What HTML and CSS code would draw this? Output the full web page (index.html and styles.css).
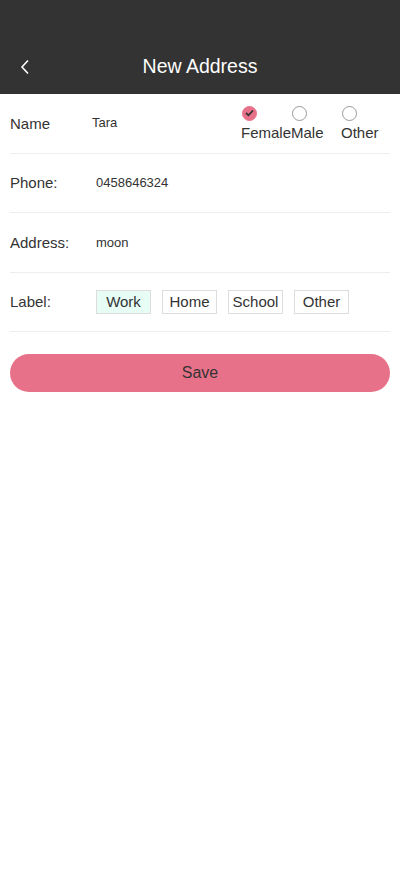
FILE: index.html
```html
<!DOCTYPE html>
<html>
<head>
<meta charset="utf-8">
<link rel="stylesheet" href="styles.css">
</head>
<body>
<div class="header">
  <div class="nav">
    <span class="back"><svg width="12" height="16" viewBox="0 0 12 16"><path d="M9 1.5 L3 8 L9 14.5" fill="none" stroke="#fff" stroke-width="1.6"/></svg></span>
    <span class="title">New Address</span>
  </div>
</div>
<div class="form">
  <div class="row">
    <span class="label name-label">Name</span>
    <span class="value name-value">Tara</span>
    <div class="radios">
      <div class="radio"><span class="circle checked"><svg width="9" height="8" viewBox="0 0 9 8"><path d="M1 4 L3.5 6.3 L8 1.5" fill="none" stroke="#333" stroke-width="1.8"/></svg></span><span class="rlabel">Female</span></div>
      <div class="radio"><span class="circle"></span><span class="rlabel">Male</span></div>
      <div class="radio"><span class="circle"></span><span class="rlabel">Other</span></div>
    </div>
  </div>
  <div class="row">
    <span class="label">Phone:</span>
    <span class="value">0458646324</span>
  </div>
  <div class="row">
    <span class="label">Address:</span>
    <span class="value">moon</span>
  </div>
  <div class="row">
    <span class="label">Label:</span>
    <div class="chips">
      <span class="chip active">Work</span>
      <span class="chip">Home</span>
      <span class="chip">School</span>
      <span class="chip">Other</span>
    </div>
  </div>
  <div class="save">Save</div>
</div>
</body>
</html>
```
FILE: styles.css
```css
* { box-sizing: border-box; }
body {
  margin: 0;
  font-family: "Liberation Sans", Arial, sans-serif;
  color: #333;
  background: #fff;
}
.header {
  background: #333333;
  height: 94px;
  padding-top: 44px;
}
.nav {
  height: 44px;
  display: flex;
  align-items: center;
  justify-content: center;
  position: relative;
}
.back {
  position: absolute;
  left: 19px;
  top: 15px;
  display: flex;
}
.title {
  color: #fff;
  font-size: 19.5px;
}
.form {
  padding: 0 10px;
}
.row {
  height: 59.5px;
  border-bottom: 1px solid #eeeeee;
  display: flex;
  align-items: center;
  font-size: 15px;
}
.label {
  width: 86px;
  flex: none;
  font-size: 15px;
}
.name-label { width: 82px; }
.value {
  font-size: 13px;
}
.name-value { flex: 1; margin-top: -1px; }
.radios {
  display: flex;
  margin-right: -1px;
  width: 150px;
}
.radio {
  width: 50px;
  display: flex;
  flex-direction: column;
  align-items: flex-start;
  margin-top: 1px;
}
.circle {
  width: 15px;
  height: 15px;
  border-radius: 50%;
  border: 1px solid #999;
  margin-left: 1px;
  display: flex;
  align-items: center;
  justify-content: center;
}
.circle.checked {
  background: #e8718a;
  border-color: #e8718a;
}
.rlabel {
  font-size: 15px;
  line-height: 18px;
  margin-top: 3px;
  white-space: nowrap;
}
.chips {
  display: flex;
  gap: 11px;
}
.chip {
  width: 55px;
  height: 24px;
  border: 1px solid #dddddd;
  display: flex;
  align-items: center;
  justify-content: center;
  font-size: 15px;
  background: #fff;
}
.chip.active {
  background: #e6fcf5;
}
.save {
  margin-top: 22px;
  height: 38px;
  border-radius: 19px;
  background: #e8718a;
  display: flex;
  align-items: center;
  justify-content: center;
  font-size: 16px;
  color: #333;
}
```
